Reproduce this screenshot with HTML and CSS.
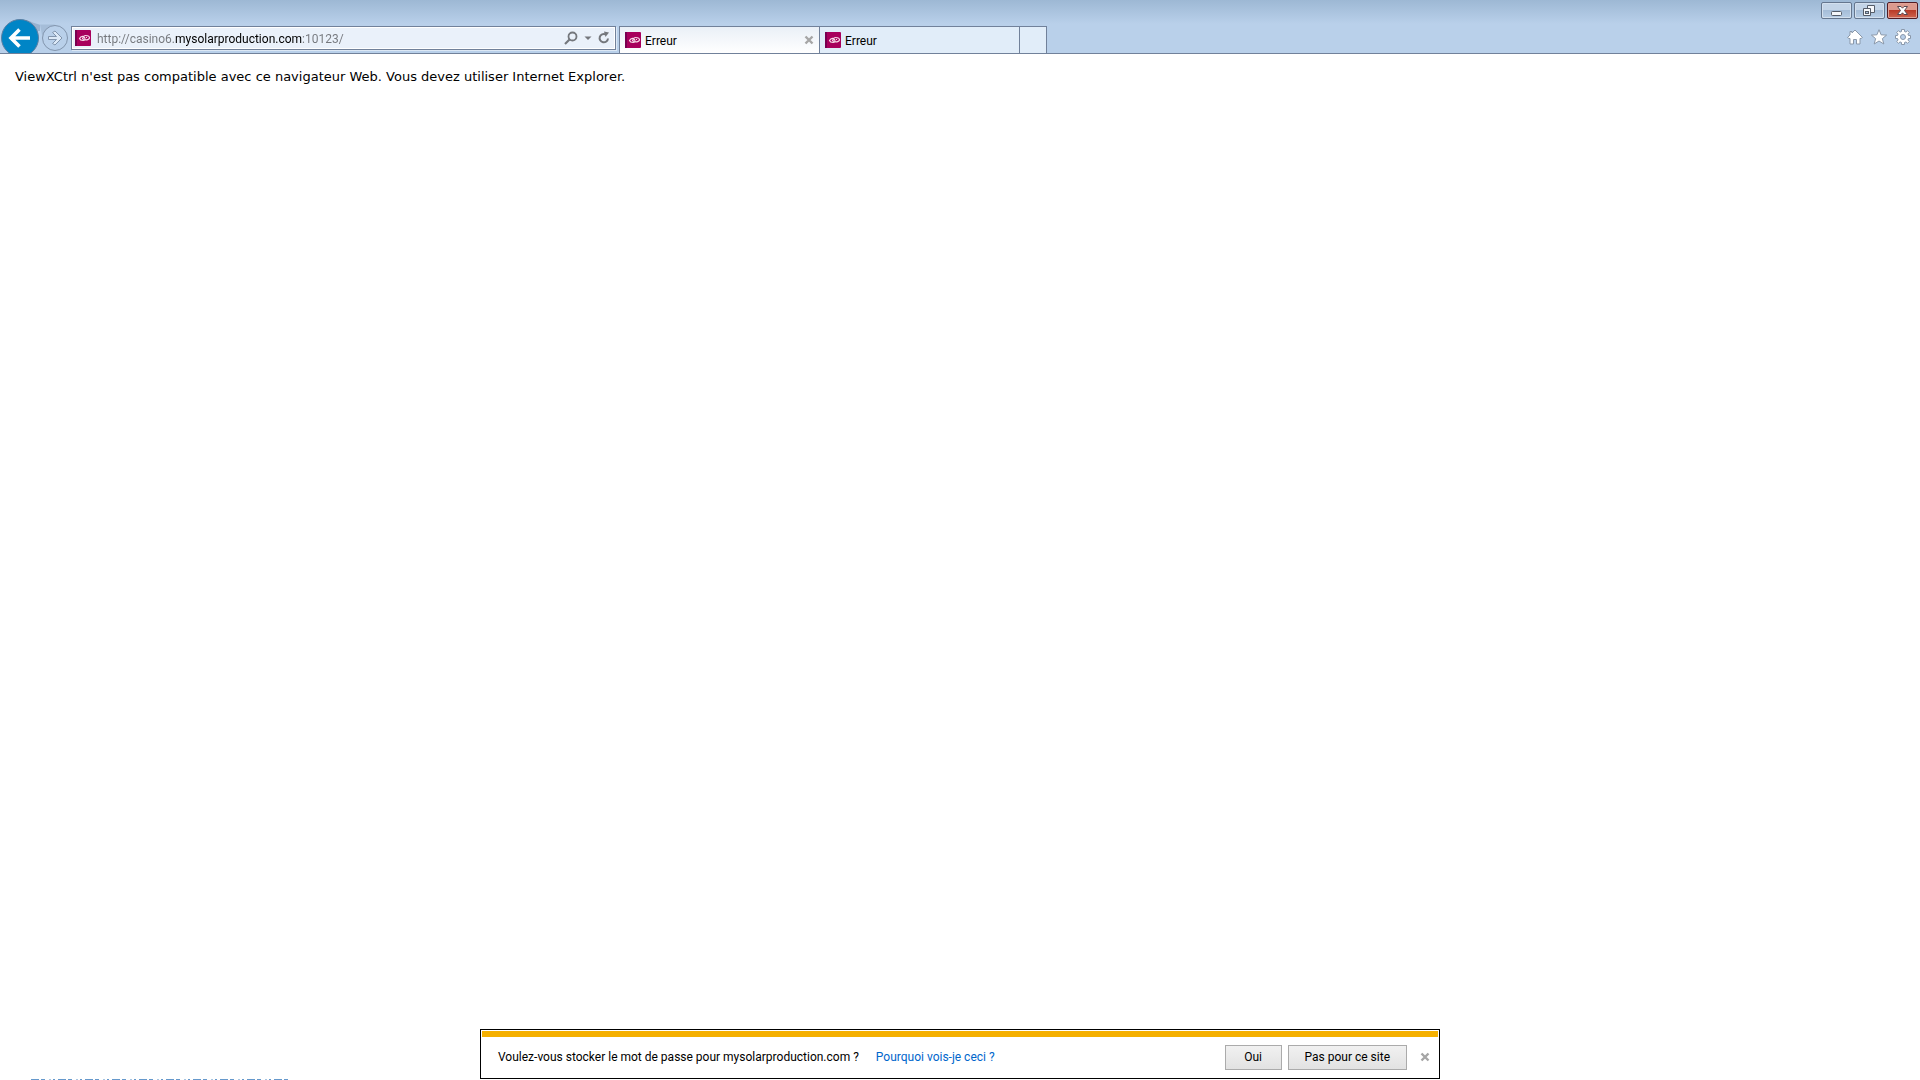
FILE: index.html
```html
<!DOCTYPE html>
<html lang="fr">
<head>
<meta charset="utf-8">
<title>Erreur</title>
<meta name="viewport" content="width=device-width, initial-scale=1.0">
<link rel="stylesheet" href="styles.css">
</head>
<body>
<!-- site icon, used by the address bar and the tabs -->
<svg class="defs" width="0" height="0">
	<symbol id="favicon" viewBox="0 0 16 16">
		<rect width="16" height="16" rx="1" fill="#a8005c"/>
		<rect width="2" height="16" fill="#780050"/>
		<path d="M4.500 8.500C5.500 6.500 7 6 8.500 6.500C11 8 10 10.500 8 10.500C6.500 10.500 5 10 4.500 8.500ZM8.500 10C7 8 8.500 5.500 10.500 5.500C13 5.500 14.500 6.500 14.500 8C14 9.500 11.500 10.500 10 9.500" fill="none" stroke="#f6dbe8" stroke-width="1.200"/>
		<path d="M7 8.500H8M11 7.500H12" stroke="#f6dbe8"/>
	</symbol>
	<symbol id="cross" viewBox="0 0 10 10">
		<path d="M1.500 1.500L8.500 8.500M8.500 1.500L1.500 8.500" stroke="#a6a6a6" stroke-width="2.400"/>
	</symbol>
</svg>

<header class="chrome">
	<div class="nav">
		<button class="nav-btn" aria-label="Précédent">
			<svg width="40" height="35" viewBox="0 -1 40 35">
				<path d="M20 0.500C30 0.500 33 5 42 6V12H30Z" fill="#98b2cf"/>
				<circle cx="20" cy="19" r="18.500" fill="#0085c6" stroke="#5b7fa3"/>
				<path d="M11 19H30M19.500 10.500L11 19L19.500 27.500" fill="none" stroke="#fff" stroke-width="3.600"/>
			</svg>
		</button>
		<button class="nav-btn" aria-label="Suivant">
			<svg width="29" height="35" viewBox="0 -1 29 35">
				<path d="M0 5.500H15L2 16Z" fill="#a5bdd8"/>
				<circle cx="15" cy="19" r="12.500" fill="#b9d0ea" stroke="#8295ad"/>
				<path d="M8.500 17.500H16.500L12.500 13.500L15 12L22 19L15 26L12.500 24.500L16.500 20.500H8.500Z" fill="#dce9f7" stroke="#8295ad"/>
			</svg>
		</button>
	</div>
	<form class="address">
		<svg width="16" height="16"><use href="#favicon"/></svg>
		<input class="url" type="text" aria-label="Adresse" value="http://casino6.mysolarproduction.com:10123/">
		<button type="button" class="tool" aria-label="Rechercher">
			<svg width="14" height="14" viewBox="0 0 14 14"><circle cx="8.500" cy="5.500" r="4" fill="none" stroke="#74777c" stroke-width="1.800"/><path d="M5.500 8.500L1 13" stroke="#74777c" stroke-width="2.200"/></svg>
		</button>
		<button type="button" class="tool" aria-label="Afficher la liste">
			<svg width="8" height="14" viewBox="0 0 8 14"><path d="M0.500 5.500H7.500L4 9Z" fill="#74777c"/></svg>
		</button>
		<button type="button" class="tool" aria-label="Actualiser">
			<svg width="12" height="14" viewBox="0 0 12 14"><path d="M7.500 3.300A4.200 4.200 0 1 0 10 7.500" fill="none" stroke="#74777c" stroke-width="2"/><path d="M6 0.500L11 1.500L7.500 6Z" fill="#74777c"/></svg>
		</button>
	</form>
	<div class="tabs">
		<div class="tab active">
			<svg width="16" height="16"><use href="#favicon"/></svg>
			<span>Erreur</span>
			<button class="close" aria-label="Fermer l'onglet"><svg width="10" height="10"><use href="#cross"/></svg></button>
		</div>
		<div class="tab">
			<svg width="16" height="16"><use href="#favicon"/></svg>
			<span>Erreur</span>
		</div>
		<button class="new-tab" aria-label="Nouvel onglet"></button>
	</div>
	<div class="corner">
		<div class="win-btns">
			<button class="win" aria-label="Réduire">
				<svg width="29" height="15" viewBox="0 0 29 15"><rect x="9.500" y="8.500" width="10" height="4" rx="1" fill="#f5f7fa" stroke="#555c68"/></svg>
			</button>
			<button class="win" aria-label="Restaurer">
				<svg width="29" height="15" viewBox="0 0 29 15"><path d="M12.500 2.500H19.500V9.500H12.500Z" fill="#f5f7fa" stroke="#555c68"/><path d="M8.500 5.500H15.500V12.500H8.500Z" fill="#f5f7fa" stroke="#555c68"/><rect x="10.500" y="8.500" width="3" height="2" fill="#a9c1dc" stroke="#555c68"/></svg>
			</button>
			<button class="win win-close" aria-label="Fermer">
				<svg width="29" height="15" viewBox="0 0 29 15"><path d="M9.500 3.500H13L14.500 5.200L16 3.500H19.500L16.500 7.500L19.500 11.500H16L14.500 9.800L13 11.500H9.500L12.500 7.500Z" fill="#fff" stroke="#584850"/></svg>
			</button>
		</div>
		<div class="ie-btns">
			<button class="tool" aria-label="Accueil">
				<svg width="16" height="16" viewBox="0 0 16 16"><path d="M8 1L15.500 8.500L14 9.500H13V15H9.500V10.500H6.500V15H3V9.500H2L0.500 8.500L3 6V2.500H5V4Z" fill="#fff" stroke="#8a98aa"/></svg>
			</button>
			<button class="tool" aria-label="Favoris">
				<svg width="16" height="16" viewBox="0 0 16 16"><path d="M8 0.700L10.100 5.800L15.600 6.100L11.400 9.600L12.800 15L8 12L3.200 15L4.600 9.600L0.400 6.100L5.900 5.800Z" fill="#fff" stroke="#8a98aa"/></svg>
			</button>
			<button class="tool" aria-label="Outils">
				<svg width="16" height="16" viewBox="0 0 16 16">
					<path d="M6.500 0.500H9.500V2.500L11 3.100L12.500 1.700L14.300 3.500L12.900 5L13.500 6.500H15.500V9.500H13.500L12.900 11L14.300 12.500L12.500 14.300L11 12.900L9.500 13.500V15.500H6.500V13.500L5 12.900L3.500 14.300L1.700 12.500L3.100 11L2.500 9.500H0.500V6.500H2.500L3.100 5L1.700 3.500L3.500 1.700L5 3.100L6.500 2.500Z" fill="#fff" stroke="#8a98aa"/>
					<circle cx="8" cy="8" r="2.500" fill="#b9d0ea" stroke="#8a98aa"/>
				</svg>
			</button>
		</div>
	</div>
</header>

<main>
	<p>ViewXCtrl n'est pas compatible avec ce navigateur Web. Vous devez utiliser Internet Explorer.</p>
</main>

<section class="notice">
	<span>Voulez-vous stocker le mot de passe pour mysolarproduction.com ?</span>
	<a href="#">Pourquoi vois-je ceci ?</a>
	<div class="notice-btns">
		<button>Oui</button>
		<button>Pas pour ce site</button>
	</div>
	<button class="close" aria-label="Fermer"><svg width="10" height="10"><use href="#cross"/></svg></button>
</section>
<!-- top edge of the link tooltip -->
<div class="edge"></div>
</body>
</html>
```
FILE: styles.css
```css
* {
	box-sizing: border-box;
}
body {
	margin: 0;
	min-height: 100vh;
	display: flex;
	flex-direction: column;
	background: #fff;
	color: #000;
	font: 12px/16px "Segoe UI", Roboto, sans-serif;
}
button {
	font: inherit;
	color: inherit;
	padding: 0;
	border: 0;
	background: none;
}
svg {
	display: block;
	flex: none;
}
.defs {
	position: absolute;
}

/* browser bar */
.chrome {
	display: flex;
	align-items: flex-end;
	height: 54px;
	border-bottom: 1px solid #71819a;
	background: linear-gradient(#9db8d4, #b9d0ea 24px);
}
.nav {
	display: flex;
	width: 71px;
}
.address {
	display: flex;
	align-items: center;
	gap: 6px;
	width: 545px;
	height: 24px;
	margin: 0 3px 3px 0;
	padding: 0 5px 0 3px;
	border: 1px solid #71819a;
	background: #eaf1fa;
	box-shadow: inset 0 0 0 1px #fff, 1px 1px 0 #dce8f5;
}
.url {
	flex: 1;
	min-width: 0;
	padding: 1px 0 0;
	border: 0;
	outline: 0;
	font: inherit;
	/* the domain is black, the rest of the address grey */
	color: transparent;
	caret-color: #000;
	background: linear-gradient(90deg, #74777c 78px, #000 78px, #000 205px, #74777c 205px);
	-webkit-background-clip: text;
	background-clip: text;
}
.tabs {
	display: flex;
	height: 27px;
	border: 1px solid #71819a;
	border-bottom: 0;
	background: #e1edf9;
}
.tab {
	display: flex;
	align-items: center;
	gap: 4px;
	width: 200px;
	padding: 0 5px;
	border-right: 1px solid #71819a;
}
.tab.active {
	background: linear-gradient(#eaf0f7, #fff);
}
.tab span {
	flex: 1;
	padding-top: 2px;
}
.new-tab {
	width: 26px;
}
.corner {
	align-self: stretch;
	margin-left: auto;
	padding: 2px 2px 0 0;
}
.win-btns {
	display: flex;
	gap: 2px;
}
.win {
	border: 1px solid #65768e;
	border-radius: 2px;
	background: linear-gradient(#c3d4e7 50%, #a5bdd8 50%, #b7cde5);
	box-shadow: inset 0 0 0 1px #d3e0ee;
}
.win-close {
	border-color: #521c24;
	background: linear-gradient(#dc9a8e 45%, #b93b28 50%, #cf6550);
	box-shadow: inset 0 0 0 1px #e0a398;
}
.ie-btns {
	display: flex;
	justify-content: flex-end;
	gap: 8px;
	padding: 10px 7px 0 0;
}

/* page */
main {
	flex: 1;
	padding: 15px;
	font: 13px/16px Verdana, "DejaVu Sans", sans-serif;
}
main p {
	margin: 0;
}

/* password bar */
.notice {
	display: flex;
	align-items: center;
	width: 50%;
	height: 50px;
	margin: 0 auto;
	padding: 6px 9px 0 17px;
	border: 1px solid #000;
	background: linear-gradient(#f5b000, #f5b000) 1px 1px / calc(100% - 2px) 6px no-repeat #fff;
}
.notice a {
	margin-left: 17px;
	color: #0066cc;
	text-decoration: none;
}
.notice-btns {
	display: flex;
	gap: 6px;
	margin: 0 13px 0 auto;
}
.notice-btns button {
	min-width: 57px;
	height: 25px;
	padding: 0 16px;
	border: 1px solid #ababab;
	background: linear-gradient(#f1f1f1, #e2e2e2);
}
.edge {
	width: 257px;
	height: 1px;
	margin-left: 31px;
	background: repeating-linear-gradient(90deg, #6699cc 0 8px, #fff 8px 10px, #6699cc 10px 14px, #fff 14px 18px, #a9c6e2 18px 20px, #fff 20px 22px, #6699cc 22px 24px, #fff 24px 27px);
}
```
